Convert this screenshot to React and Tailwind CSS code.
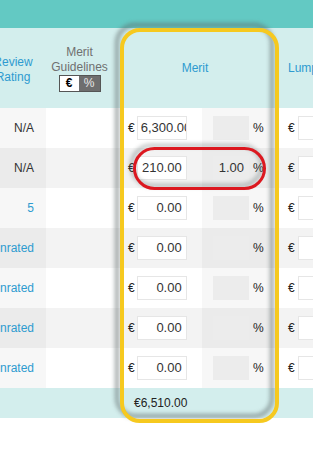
import React from 'react';

const rows = [
  { rating: 'N/A', link: false, merit: '6,300.00', overflow: true, pct: '' },
  { rating: 'N/A', link: false, merit: '210.00', pct: '1.00' },
  { rating: '5', link: true, merit: '0.00', pct: '' },
  { rating: 'Unrated', link: true, merit: '0.00', pct: '' },
  { rating: 'Unrated', link: true, merit: '0.00', pct: '' },
  { rating: 'Unrated', link: true, merit: '0.00', pct: '' },
  { rating: 'Unrated', link: true, merit: '0.00', pct: '' },
];

const Row = ({ row, even }) => {
  const base = even ? 'bg-[#f3f3f3]' : 'bg-white';
  const shade = even ? 'bg-[#ebebeb]' : 'bg-[#f7f7f7]';
  return (
    <div className={`flex h-[40px] ${base}`}>
      {/* Review rating */}
      <div className={`w-[66px] shrink-0 flex items-center justify-end pr-[12px] text-[12px] ${shade} ${row.link ? 'text-[#2e9bd0]' : 'text-[#333]'}`}>
        {row.rating}
      </div>
      {/* Merit guidelines (empty) */}
      <div className="w-[72px] shrink-0" />
      {/* Merit amount */}
      <div className="w-[84px] shrink-0 flex items-center pl-[10px] text-[12px] text-[#222]">
        <span>€</span>
        <div
          className={`ml-[2px] w-[50px] h-[24px] flex items-center overflow-hidden whitespace-nowrap bg-white border border-[#e6e6e6] text-[13px] text-[#333] ${
            row.overflow ? 'justify-start pl-[3px]' : 'justify-end pr-[4px]'
          }`}
        >
          {row.merit}
        </div>
      </div>
      {/* Merit percent */}
      <div className={`w-[70px] shrink-0 flex items-center pl-[11px] ${shade}`}>
        <div className="w-[36px] h-[24px] flex items-center justify-end pr-[5px] bg-[#ececec] text-[13px] text-[#333]">
          {row.pct}
        </div>
        <span className="ml-[4px] text-[12px] text-[#222]">%</span>
      </div>
      {/* Lump sum */}
      <div className="flex-1 min-w-0 flex items-center pl-[16px] text-[12px] text-[#222]">
        <span>€</span>
        <div className="ml-[3px] w-[60px] shrink-0 h-[24px] bg-white border border-[#e6e6e6]" />
      </div>
    </div>
  );
};

export default function App() {
  return (
    <div className="relative w-[313px] h-[451px] overflow-hidden bg-white font-['Liberation_Sans',Arial,sans-serif]">
      {/* Top bar */}
      <div className="h-[28px] bg-[#63c9c3]" />

      <div className="ml-[-20px] w-[333px]">
        {/* Header */}
        <div className="flex items-center h-[80px] bg-[#d3eeed]">
          <div className="w-[66px] shrink-0 pt-[3px] text-center text-[12px] leading-[15px] text-[#2e9bd0]">
            Review
            <br />
            Rating
          </div>
          <div className="w-[72px] shrink-0 pr-[5px] flex flex-col items-center text-[12px] leading-[15px] text-[#707070]">
            <span>Merit</span>
            <span>Guidelines</span>
            <div className="flex h-[17px] border border-[#555] text-[12px] leading-[15px]">
              <span className="w-[19px] text-center bg-white text-black font-bold">€</span>
              <span className="w-[21px] text-center bg-[#6e6e6e] text-[#e8e8e8]">%</span>
            </div>
          </div>
          <div className="w-[154px] shrink-0 text-center text-[12px] text-[#2e9bd0]">Merit</div>
          <div className="flex-1 min-w-0 pl-[16px] text-[12px] text-[#2e9bd0] whitespace-nowrap">Lump Sum</div>
        </div>

        {/* Rows */}
        {rows.map((row, i) => (
          <Row key={i} row={row} even={i % 2 === 1} />
        ))}

        {/* Footer total */}
        <div className="flex items-center h-[30px] bg-[#d3eeed] text-[12px] text-[#222]">
          <span className="ml-[154px]">€6,510.00</span>
        </div>
      </div>

      {/* Yellow highlight around Merit column */}
      <div className="absolute left-[115px] top-[23px] w-[159px] h-[395px] rounded-[20px] border-[4px] border-[#5f6b6b]/60 blur-[2px]" />
      <div className="absolute left-[120px] top-[28px] w-[159px] h-[395px] rounded-[20px] border-[4px] border-[#f6c91f]" />

      {/* Red ellipse around edited row */}
      <div className="absolute left-[130px] top-[144px] w-[133px] h-[43px] rounded-full border-[3px] border-[#5f6b6b]/50 blur-[2px]" />
      <div className="absolute left-[133px] top-[147px] w-[133px] h-[43px] rounded-full border-[3px] border-[#dc1820]" />
    </div>
  );
}
